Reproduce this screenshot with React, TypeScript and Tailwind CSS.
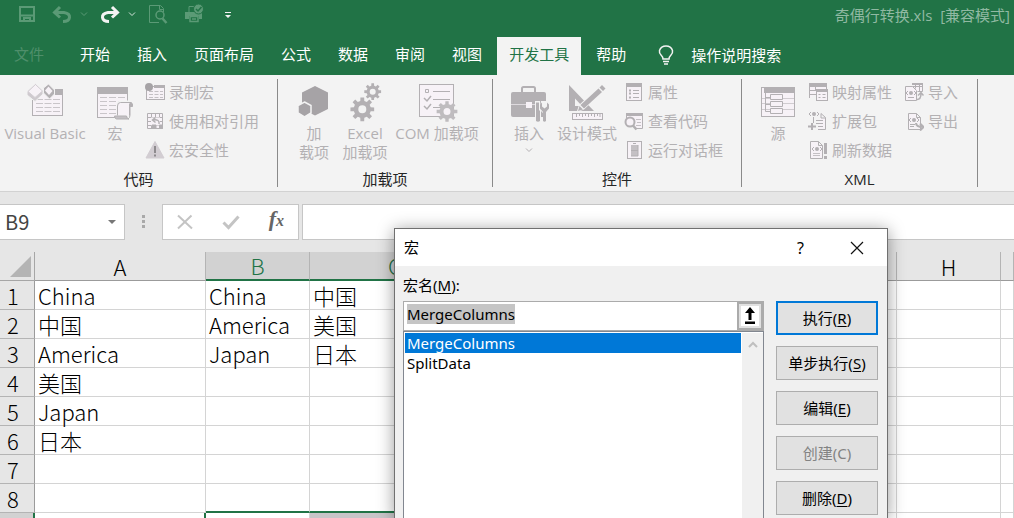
import React, { useEffect, useRef, useState, ReactNode } from 'react';

const INK = '#b3b0b3';
const PALE = '#f7f2f7';

const tabs = ['开始', '插入', '页面布局', '公式', '数据', '审阅', '视图', '开发工具', '帮助'];

const columns = ['A', 'B', 'C', 'D', 'E', 'F', 'G', 'H', 'I'];

const rows = [
  ['China', 'China', '中国'],
  ['中国', 'America', '美国'],
  ['America', 'Japan', '日本'],
  ['美国'],
  ['Japan'],
  ['日本'],
  [],
  [],
  [],
];

const macros = ['MergeColumns', 'SplitData'];

const dialogButtons = [
  { label: '执行', hotkey: 'R', primary: true },
  { label: '单步执行', hotkey: 'S' },
  { label: '编辑', hotkey: 'E' },
  { label: '创建', hotkey: 'C', disabled: true },
  { label: '删除', hotkey: 'D' },
];

// ---------- icons ----------

const gearPath = (cx: number, cy: number, r: number, hole: number, teeth = 8) => {
  const pts: string[] = [];
  const step = (Math.PI * 2) / teeth;
  for (let i = 0; i < teeth; i++) {
    const a = i * step - Math.PI / 2;
    [
      [-0.3, 0.72],
      [-0.2, 1],
      [0.2, 1],
      [0.3, 0.72],
    ].forEach(([off, k]) => {
      const t = a + off * step;
      pts.push(`${(cx + Math.cos(t) * r * k).toFixed(2)} ${(cy + Math.sin(t) * r * k).toFixed(2)}`);
    });
  }
  return `M${pts.join('L')}ZM${cx - hole} ${cy}a${hole} ${hole} 0 1 0 ${hole * 2} 0a${hole} ${hole} 0 1 0 ${-hole * 2} 0Z`;
};

const BigIcon = ({ children }: { children: ReactNode }) => (
  <svg className="h-[42px] w-[42px] shrink-0" viewBox="0 0 42 42" fill="none" stroke={INK} aria-hidden="true">
    {children}
  </svg>
);

const SmallIcon = ({ children }: { children: ReactNode }) => (
  <svg className="h-5 w-5 shrink-0" viewBox="0 0 20 20" fill="none" stroke={INK} aria-hidden="true">
    {children}
  </svg>
);

const VisualBasicIcon = () => (
  <BigIcon>
    <rect x="8.5" y="9.5" width="30" height="24" fill={PALE} />
    <rect x="31" y="7" width="8" height="6" fill={INK} stroke="none" />
    <path d="M12 17.5h24M12 21.5h24M12 25.5h24M12 29.5h24" strokeDasharray="7 1.5" stroke="#c9c5c9" />
    <path d="M11.500 1.500L19 9v3l-8 7.500L3 13v-3.500z" fill="#cfcacf" stroke="#f3f3f3" />
    <path d="M11.500 2.500L18.500 9L11 15.500L4 9.500z" fill={PALE} stroke="#d4cfd4" />
    <path d="M24.500 2l6 6v4l-5 5-6-6V6z" fill={INK} stroke="#f3f3f3" />
    <path d="M24.500 4.500l4 4.500-3.500 4-4-4.500z" fill={PALE} stroke="none" />
  </BigIcon>
);

const MacroIcon = () => (
  <BigIcon>
    <rect x="3.500" y="5.500" width="30" height="30" fill={PALE} />
    <rect x="3" y="5" width="31" height="7" fill={INK} stroke="none" />
    <path d="M6 15.500h25M6 19.500h25M6 23.500h25M6 27.500h25M6 31.500h25" strokeDasharray="7 2" stroke="#c9c5c9" />
    <path d="M24 35V23q0-3 3-3h11q1.500 0 1.500 2.500v2H36V35z" fill={PALE} stroke="#f3f3f3" strokeWidth="3" />
    <path d="M23.500 33.500V24q0-3.500 3-3.500h10.500q-1.500 1-1.500 4v9" fill={PALE} />
    <path d="M37 20.500q2 .5 1.500 4h-3q0-4 1.500-4z" fill={INK} />
    <path d="M20.500 34h12q0 2.500 2.500 3H22.500q-2-.5-2-3z" fill="#c4c0c4" />
    <path d="M36 25v8q0 3-2 4" />
  </BigIcon>
);

const AddInsIcon = () => (
  <BigIcon>
    <path d="M22 4L35 10.500V27L22 33.500L9 27V10.500z" fill="#a6a3a6" stroke="none" />
    <path d="M11.500 20L18 23.500V31L11.500 35L5 31V23.500z" fill="#a6a3a6" stroke="#f3f3f3" strokeWidth="1.500" />
  </BigIcon>
);

const GearsIcon = () => (
  <BigIcon>
    <path d={gearPath(18.3, 27.3, 12, 4)} fill={INK} fillRule="evenodd" stroke="none" />
    <path d={gearPath(28.700, 9.700, 8.500, 3)} fill={INK} fillRule="evenodd" stroke="none" />
  </BigIcon>
);

const ComIcon = () => (
  <BigIcon>
    <rect x="3.500" y="2.500" width="34" height="32" fill={PALE} />
    <path d="M9.500 7.500h3v3h-3zM17 9.500h17M17 17.500h17M17 25.500h10" />
    <path d="M8 16l3 3 4-5M8 24l3 3 4-5" strokeWidth="1.500" />
    <path d={gearPath(31, 29.500, 10.500, 3.500)} fill="#bfbcbf" fillRule="evenodd" stroke="none" />
  </BigIcon>
);

const ToolboxIcon = () => (
  <BigIcon>
    <path d="M14 10V6.500q0-1.500 1.500-1.500h10q1.500 0 1.500 1.500V10" strokeWidth="2" />
    <rect x="3" y="10" width="35" height="25" rx="2" fill={INK} stroke="none" />
    <path d="M3 22.500h15M24 22.500h14" stroke="#dedade" />
    <rect x="18" y="20" width="6" height="6" fill={PALE} stroke="none" />
    <path d="M27 19h5v9h1v12h-6V28zM33 19h9v9l-3 3v9h-4v-9l-3-3z" fill="#f3f3f3" stroke="none" />
    <path d="M28 20.500h3v8h1V39q-2 1.500-4 0V28.500z" fill={INK} stroke="none" />
    <path d="M34 20.500v4l2.500 2 2.500-2v-4l2 2v4l-3 3.500v9q-1.500 1.500-3 0v-9l-3-3.500v-4z" fill={INK} stroke="none" />
  </BigIcon>
);

const DesignIcon = () => (
  <BigIcon>
    <path d="M3 3L28 29H3zM9 16.500V24h7z" fill={INK} fillRule="evenodd" stroke="none" />
    <path d="M36.500 1.500L41 6L18 27.500L10.500 30.500L13 23z" fill="#f3f3f3" stroke="none" />
    <path d="M36 3l3.500 3.500-2.500 2.500-3.500-3.500zM32.500 6.500l3.500 3.500L18 26.500 14.500 23zM13.500 24l3.500 3.500L12 29z" fill={INK} stroke="none" />
    <rect x="6.500" y="31.500" width="30" height="6" fill={PALE} />
    <path d="M10.500 32v3M13.500 32v2M16.500 32v3M19.500 32v2M22.500 32v3M25.500 32v2M28.500 32v3M31.500 32v2M34 32v3" />
  </BigIcon>
);

const SourceIcon = () => (
  <BigIcon>
    <rect x="4.500" y="5.500" width="33" height="29" fill={PALE} />
    <rect x="7" y="5" width="31" height="6" fill={INK} stroke="none" />
    <path d="M5 16.500h32M5 21.500h32M5 27.500h32" stroke="#d0ccd0" />
    <path d="M8.500 5v24.500H14M8.500 15.500H14M8.500 22.500H14" />
    <path d="M13.500 12.500h12v5h-12zM13.500 19.500h12v5h-12zM13.500 26.500h12v5h-12z" fill={PALE} />
  </BigIcon>
);

const RecordIcon = () => (
  <SmallIcon>
    <rect x="1.500" y="4.500" width="18" height="13" fill={PALE} />
    <rect x="9" y="3" width="11" height="3" fill={INK} stroke="none" />
    <path d="M4 9.500h14M4 12.500h14M4 15.500h14" strokeDasharray="4 1.500" stroke="#c4c0c4" />
    <circle cx="4" cy="5" r="4" fill="#a6a3a6" stroke="none" />
  </SmallIcon>
);

const RelativeIcon = () => (
  <SmallIcon>
    <path d="M2.500 2.500h15v15h-15zM2.500 6.500h15M2.500 10.500h15M2.500 14.500h15M6.500 2.500v15M10.500 2.500v15M14.500 2.500v15" fill={PALE} />
    <path d="M6 6.500h9v8H6z" fill={PALE} stroke="none" />
    <path d="M14 13q1-5-6-4M10.500 6.500L7.500 9l3 2.500" strokeWidth="1.500" />
    <path d="M7 14h4v3.500H7zM14.500 14h3v3.500h-3z" fill={INK} />
  </SmallIcon>
);

const WarningIcon = () => (
  <SmallIcon>
    <path d="M10 1.500L19 18H1z" fill="#d2cdd2" stroke="#d2cdd2" strokeLinejoin="round" />
    <path d="M10 6v7M10 14.500v2" stroke="#8e8b8e" strokeWidth="2" />
  </SmallIcon>
);

const PropertiesIcon = () => (
  <SmallIcon>
    <rect x="2.500" y="1.500" width="15" height="17" fill={PALE} />
    <rect x="2" y="1" width="16" height="4" fill={INK} stroke="none" />
    <path d="M9 8.500h6M9 11.500h6M9 15.500h6" />
    <path d="M5 8.500h2M5 11.500h2M5 15.500h2" strokeWidth="2" />
  </SmallIcon>
);

const ViewCodeIcon = () => (
  <SmallIcon>
    <path d="M2.500 7V3.500h16v14H12" fill={PALE} />
    <rect x="2" y="2" width="17" height="3" fill={INK} stroke="none" />
    <path d="M12 8.500h5M13 11.500h4M12 14.500h5" stroke="#c4c0c4" />
    <circle cx="6" cy="11" r="4.500" fill={PALE} strokeWidth="2" />
    <path d="M9 14.500l3.500 4" strokeWidth="2.500" />
  </SmallIcon>
);

const RunDialogIcon = () => (
  <SmallIcon>
    <rect x="3.500" y="1.500" width="14" height="17" fill={PALE} />
    <path d="M9 3.500h3" />
    <rect x="7" y="5" width="7" height="11" fill="#c4c0c4" stroke="none" />
    <path d="M7 10.500h7M14 5v11H7" />
  </SmallIcon>
);

const MapIcon = () => (
  <SmallIcon>
    <path d="M1.500 16V2.500h17V8M2 8.500h7M2 12.500h7M7.500 5v3" fill={PALE} />
    <rect x="1" y="1" width="18" height="4" fill={INK} stroke="none" />
    <rect x="8.500" y="8.500" width="11" height="10" fill={PALE} />
    <rect x="8" y="7" width="12" height="3" fill={INK} stroke="none" />
    <path d="M10.500 12.500h2M14.500 12.500h3M10.500 15.500h2M14.500 15.500h3" />
  </SmallIcon>
);

const Eye = ({ x, y }: { x: number; y: number }) => (
  <g transform={`translate(${x} ${y})`}>
    <path d="M-3 -2L-5 0L-3 2M3 -2L5 0L3 2" />
    <circle r="2" fill={INK} stroke="none" />
  </g>
);

const ExpansionIcon = () => (
  <SmallIcon>
    <path d="M5.500 12V6M13 2.500l4.500 4V18.500H10M13 2.500V7h4.500" fill={PALE} />
    <path d="M8 9.500h7M8 12.500h7M10 15.500h5" />
    <Eye x={6} y={3} />
    <path d="M4 12v7M0 15.500h8" strokeWidth="2" />
  </SmallIcon>
);

const RefreshIcon = () => (
  <SmallIcon>
    <path d="M2.500 1.500h8l4 4v13h-12zM10.500 1.500v4h4" fill={PALE} />
    <path d="M5 13.500h7M5 15.500h7" stroke="#c4c0c4" />
    <Eye x={9} y={9} />
    <path d="M17.500 3v11M17.500 16v3" strokeWidth="3" />
  </SmallIcon>
);

const ImportIcon = () => (
  <SmallIcon>
    <path d="M1.500 4.500h7l4 4v10h-11z" fill={PALE} />
    <path d="M8.500 1.500h10v8h-5M8.500 4.500h10M11.500 1.500v5M15.500 1.500v8" fill={PALE} />
    <path d="M8 1h11v2H8z" fill={INK} stroke="none" />
    <Eye x={7} y={11} />
    <path d="M4 15.500h6" />
    <path d="M13 17.500q4 0 4-6M14 13.500l3-3 2.500 3" strokeWidth="1.500" />
  </SmallIcon>
);

const ExportIcon = () => (
  <SmallIcon>
    <path d="M4.500 2.500h8l4 4v12h-12zM12.500 2.500v4h4" fill={PALE} />
    <Eye x={10} y={9} />
    <path d="M6 13.500h5M6 15.500h4" />
    <path d="M12 12q0 4 7 4M16 12.500l3.500 3.500-3.500 3.500" strokeWidth="2" />
  </SmallIcon>
);

const DownChevron = ({ color }: { color: string }) => (
  <svg className="h-1.5 w-2" viewBox="0 0 8 6" fill="none" stroke={color} aria-hidden="true">
    <path d="M1 1.500l3 3 3-3" />
  </svg>
);

// ---------- ribbon ----------

const LargeButton = ({ icon, className, children }: { icon: ReactNode; className: string; children: ReactNode }) => (
  <button type="button" disabled className={`flex shrink-0 flex-col items-center pt-[3px] leading-[19px] whitespace-nowrap ${className}`}>
    {icon}
    {children}
  </button>
);

const SmallButton = ({ icon, children }: { icon: ReactNode; children: ReactNode }) => (
  <button type="button" disabled className="flex h-[29px] items-center gap-1 pb-1 whitespace-nowrap">
    {icon}
    <span className="leading-5">{children}</span>
  </button>
);

const RibbonGroup = ({ title, className, children }: { title: string; className: string; children: ReactNode }) => (
  <section className={`flex shrink-0 flex-col border-r border-[#8a8a8a] ${className}`}>
    <div className="flex h-[90px] items-start text-[#b3b1b3]">{children}</div>
    <h2 className="h-[18px] text-center leading-5 text-[#262626]">{title}</h2>
  </section>
);

const Ribbon = () => (
  <div className="flex shrink-0 border-b border-[#d2d2d2] bg-[#f3f3f3] pt-1 pb-1 text-[15px]">
    <RibbonGroup title="代码" className="w-[278px]">
      <LargeButton icon={<VisualBasicIcon />} className="w-[90px]">Visual Basic</LargeButton>
      <LargeButton icon={<MacroIcon />} className="w-[50px]">宏</LargeButton>
      <div className="ml-[5px]">
        <SmallButton icon={<RecordIcon />}>录制宏</SmallButton>
        <SmallButton icon={<RelativeIcon />}>使用相对引用</SmallButton>
        <SmallButton icon={<WarningIcon />}>宏安全性</SmallButton>
      </div>
    </RibbonGroup>
    <RibbonGroup title="加载项" className="w-[215px]">
      <LargeButton icon={<AddInsIcon />} className="ml-3.5 w-11">
        <span>加<br />载项</span>
      </LargeButton>
      <LargeButton icon={<GearsIcon />} className="w-[58px]">
        <span>Excel<br />加载项</span>
      </LargeButton>
      <LargeButton icon={<ComIcon />} className="w-[86px]">COM 加载项</LargeButton>
    </RibbonGroup>
    <RibbonGroup title="控件" className="w-[249px]">
      <LargeButton icon={<ToolboxIcon />} className="ml-2.5 w-[52px]">
        插入
        <span className="mt-1"><DownChevron color={INK} /></span>
      </LargeButton>
      <LargeButton icon={<DesignIcon />} className="w-16">设计模式</LargeButton>
      <div className="ml-[5px]">
        <SmallButton icon={<PropertiesIcon />}>属性</SmallButton>
        <SmallButton icon={<ViewCodeIcon />}>查看代码</SmallButton>
        <SmallButton icon={<RunDialogIcon />}>运行对话框</SmallButton>
      </div>
    </RibbonGroup>
    <RibbonGroup title="XML" className="w-[236px]">
      <LargeButton icon={<SourceIcon />} className="ml-2.5 w-[52px]">源</LargeButton>
      <div className="ml-1">
        <SmallButton icon={<MapIcon />}>映射属性</SmallButton>
        <SmallButton icon={<ExpansionIcon />}>扩展包</SmallButton>
        <SmallButton icon={<RefreshIcon />}>刷新数据</SmallButton>
      </div>
      <div className="ml-3">
        <SmallButton icon={<ImportIcon />}>导入</SmallButton>
        <SmallButton icon={<ExportIcon />}>导出</SmallButton>
      </div>
    </RibbonGroup>
  </div>
);

// ---------- title bar and tabs ----------

const QuickAccess = () => (
  <div className="flex items-center">
    <button type="button" disabled aria-label="保存" className="ml-[18px]">
      <svg className="h-[18px] w-[18px]" viewBox="0 0 18 18" fill="none" stroke="#5b9a76" strokeWidth="2">
        <path d="M2 2h14v14H2zM2 10.500h14M6 16v-3h6v3" />
      </svg>
    </button>
    <button type="button" disabled aria-label="撤消" className="ml-4 flex items-center gap-2">
      <svg className="h-5 w-5" viewBox="0 0 20 20" fill="none" stroke="#5b9a76" strokeWidth="3">
        <path d="M3 8.500h9q6 1 5.500 5-.5 4-6.500 4" />
        <path d="M8 3L2.500 8.500 8 13.500" />
      </svg>
      <DownChevron color="#5b9a76" />
    </button>
    <button type="button" aria-label="恢复" className="ml-3 flex items-center gap-2">
      <svg className="h-5 w-5" viewBox="0 0 20 20" fill="none" stroke="#f3f3f3" strokeWidth="3">
        <path d="M17 8.500H8q-6 1-5.500 5 .5 4 6.500 4" />
        <path d="M12 3l5.500 5.500L12 13.500" />
      </svg>
      <DownChevron color="#d5e5dc" />
    </button>
    <button type="button" disabled aria-label="打印预览" className="ml-3">
      <svg className="h-5 w-5" viewBox="0 0 20 20" fill="none" stroke="#5b9a76">
        <path d="M15.500 8V4.500l-3-3H1.500v17H11M11.500 1.500v4h4" />
        <circle cx="12" cy="11" r="4" strokeWidth="1.500" />
        <path d="M14.500 14.500l4 4.500" strokeWidth="2.500" />
      </svg>
    </button>
    <button type="button" disabled aria-label="快速打印" className="ml-4">
      <svg className="h-5 w-5" viewBox="0 0 20 20" fill="none" stroke="#5b9a76">
        <path d="M5 8V2.500h5" />
        <path d="M1 8h17v7h-3v-3H5v3H1z" fill="#5b9a76" stroke="none" />
        <path d="M6 12.500h8v5H6zM8 15h4" strokeWidth="1.500" />
        <circle cx="14.500" cy="5" r="5" fill="#5b9a76" stroke="#217346" />
        <path d="M12 5l2 2 3.500-4" stroke="#217346" strokeWidth="1.500" />
      </svg>
    </button>
    <button type="button" aria-label="自定义快速访问工具栏" className="ml-5 pt-0.5">
      <svg className="h-2 w-2" viewBox="0 0 8 8" fill="#f3f3f3">
        <path d="M1 1h6v1H1zM1 4h6l-3 3z" />
      </svg>
    </button>
  </div>
);

const Header = () => (
  <header className="shrink-0 bg-[#217346] text-[15px] text-white">
    <div className="flex h-[37px] items-start justify-between pt-1 pr-1">
      <QuickAccess />
      <h1 className="leading-[22px] whitespace-pre text-[#90b9a2]">奇偶行转换.xls  [兼容模式]</h1>
    </div>
    <nav className="flex h-[38px] items-stretch gap-[3px] whitespace-nowrap">
      <button type="button" disabled className="mr-[9px] pr-3 pb-1 pl-3.5 text-[#4f8f6b]">文件</button>
      {tabs.map((tab) => (
        <button
          key={tab}
          type="button"
          className={tab === '开发工具' ? 'bg-[#f3f3f3] px-3 pb-1 text-[#217346]' : 'px-3 pb-1'}
        >
          {tab}
        </button>
      ))}
      <button type="button" className="ml-4 flex items-center gap-4 pb-0.5">
        <svg className="h-5 w-[18px]" viewBox="-1 0 18 20" fill="none" stroke="#f3f3f3" strokeWidth="1.500" aria-hidden="true">
          <path d="M5 14q0-2-2-4Q1 8 1.500 5.500 3 1 8 1t6.500 4.500Q15 8 13 10q-2 2-2 4zM5 16.500h6M6 19h4" />
        </svg>
        操作说明搜索
      </button>
    </nav>
  </header>
);

const FormulaBar = () => (
  <div className="flex h-[60px] shrink-0 items-center bg-[#e6e6e6]">
    <label className="flex h-9 w-[125px] items-center border border-l-0 border-[#c6c6c6] bg-white">
      <input
        aria-label="名称框"
        defaultValue="B9"
        className="w-[108px] bg-transparent pl-[5px] font-['Noto_Sans_CJK_SC',sans-serif] text-xl text-[#444] outline-none"
      />
      <svg className="h-1.5 w-2" viewBox="0 0 8 6" fill="#777" aria-hidden="true">
        <path d="M0 1h8L4 5z" />
      </svg>
    </label>
    <svg className="mx-[17px] h-4 w-[3px]" viewBox="0 0 3 16" fill="#a9a9a9" aria-hidden="true">
      <path d="M0 1h3v3H0zM0 6h3v3H0zM0 11h3v3H0z" />
    </svg>
    <div className="flex h-9 w-[137px] shrink-0 items-center justify-between border border-[#c6c6c6] bg-white px-3.5">
      <button type="button" aria-label="取消">
        <svg className="h-4 w-4" viewBox="0 0 16 16" fill="none" stroke="#c4c4c4" strokeWidth="2">
          <path d="M1 1.500l14 13M14.500 1.500L1 14.500" />
        </svg>
      </button>
      <button type="button" aria-label="输入">
        <svg className="h-4 w-[18px]" viewBox="0 0 18 16" fill="none" stroke="#c4c4c4" strokeWidth="3">
          <path d="M1.500 8.500l5 5L16.500 2.500" />
        </svg>
      </button>
      <button type="button" aria-label="插入函数" className="pb-1 font-['Liberation_Serif',serif] text-[22px] leading-6 font-bold text-[#666] italic">
        f<span className="text-base">x</span>
      </button>
    </div>
    <input aria-label="编辑栏" className="ml-[3px] h-9 min-w-0 flex-1 border border-r-0 border-[#c6c6c6] bg-white px-1 outline-none" />
  </div>
);

// ---------- sheet ----------

const cellClass = (col: string, row: number) => {
  if (row === 8 && (col === 'B' || col === 'C')) return 'border-r border-b-2 border-r-[#d4d4d4] border-b-[#217346]';
  if (row === 9 && col === 'A') return 'border-r-2 border-b border-r-[#217346] border-b-[#d4d4d4]';
  if (row === 9 && col === 'C') return 'border-r border-b border-[#d4d4d4] bg-[#c8c5c8]';
  return 'border-r border-b border-[#d4d4d4]';
};

const Sheet = () => (
  <table className="w-full table-fixed border-separate border-spacing-0 bg-white text-[22px] leading-7 text-black">
    <colgroup>
      <col className="w-[35px]" />
      <col className="w-[171px]" />
      <col className="w-[104px]" />
      <col className="w-[171px]" />
      <col className="w-[104px]" />
      <col className="w-[104px]" />
      <col className="w-[104px]" />
      <col className="w-[104px]" />
      <col className="w-[104px]" />
      <col />
    </colgroup>
    <thead>
      <tr className="h-[29px] bg-[#e6e6e6]">
        <th className="border-r border-b border-[#a6a6a6] p-0 align-bottom">
          <svg className="mr-[3px] mb-[3px] ml-auto h-[21px] w-[21px]" viewBox="0 0 21 21" fill="#b4b4b4" aria-hidden="true">
            <path d="M21 0v21H0z" />
          </svg>
        </th>
        {columns.map((col) => (
          <th
            key={col}
            scope="col"
            className={
              col === 'B' || col === 'C'
                ? 'border-r border-b-2 border-r-[#b4b4b4] border-b-[#217346] bg-[#d2d2d2] p-0 leading-[27px] font-light text-[#217346]'
                : 'border-r border-b border-r-[#b4b4b4] border-b-[#9b9b9b] p-0 font-light'
            }
          >
            {col === 'I' ? '' : col}
          </th>
        ))}
      </tr>
    </thead>
    <tbody>
      {rows.map((row, i) => (
        <tr key={i} className="h-[29px]">
          <th
            scope="row"
            className={
              i === 8
                ? 'border-r-2 border-r-[#217346] bg-[#d2d2d2] p-0 pr-2 font-light text-[#217346]'
                : 'border-r border-b border-r-[#9b9b9b] border-b-[#b4b4b4] bg-[#e6e6e6] p-0 pr-2 font-light'
            }
          >
            {/* row 9 only peeks in from below */}
            {i < 8 && i + 1}
          </th>
          {columns.map((col, c) => (
            <td key={col} className={`p-0 pl-[3px] whitespace-nowrap ${cellClass(col, i + 1)}`}>
              {row[c]}
            </td>
          ))}
        </tr>
      ))}
    </tbody>
  </table>
);

// ---------- macro dialog ----------

const MacroDialog = () => {
  const [selected, setSelected] = useState('MergeColumns');
  const nameRef = useRef<HTMLInputElement>(null);

  useEffect(() => {
    nameRef.current?.focus();
    nameRef.current?.select();
  }, [selected]);

  return (
    <div
      role="dialog"
      aria-labelledby="macro-title"
      className="absolute top-[228px] bottom-0 left-[394px] flex w-[494px] flex-col border border-b-0 border-[#707070] bg-[#f0f0f0] font-['Noto_Sans','Noto_Sans_CJK_SC',sans-serif] text-[15px] text-black shadow-[0_2px_16px_rgba(0,0,0,0.4)]"
    >
      <div className="flex h-[37px] shrink-0 items-center bg-white pr-[22px] pl-[9px]">
        <h2 id="macro-title" className="flex-1">宏</h2>
        <button type="button" aria-label="帮助" className="mr-[45px] text-base">?</button>
        <button type="button" aria-label="关闭">
          <svg className="h-4 w-4" viewBox="0 0 16 16" fill="none" stroke="#111" strokeWidth="1.200">
            <path d="M2 2l12 12M14 2L2 14" />
          </svg>
        </button>
      </div>
      <div className="flex min-h-0 flex-1 gap-3 pr-[9px] pl-2">
        <div className="flex w-[361px] flex-col">
          <label htmlFor="macro-name" className="h-[35px] pt-2 leading-[22px]">
            宏名(<u className="underline-offset-2">M</u>):
          </label>
          <div className="flex h-[30px] shrink-0 border border-[#ababab] bg-white">
            <input
              id="macro-name"
              ref={nameRef}
              value={selected}
              onChange={(e) => setSelected(e.target.value)}
              className="mt-0.5 ml-[3px] h-5 min-w-0 flex-1 self-start leading-5 outline-none selection:bg-[#c5c5c5] selection:text-black"
            />
            <button type="button" aria-label="折叠" className="flex w-[26px] items-center justify-center border-2 border-[#ababab] bg-[#e1e1e1]">
              <svg className="h-5 w-[18px] bg-white" viewBox="0 0 18 20" fill="#000" aria-hidden="true">
                <path d="M9 1l5 6h-3.500v7h-3V7H4zM4 15.500h10v2.500H4z" />
              </svg>
            </button>
          </div>
          <div className="flex min-h-0 flex-1 border border-b-0 border-[#828790] bg-white pt-px pl-px">
            <ul role="listbox" aria-label="宏名" className="flex-1">
              {macros.map((name) => (
                <li
                  key={name}
                  role="option"
                  aria-selected={name === selected}
                  onClick={() => setSelected(name)}
                  className={name === selected ? 'h-5 bg-[#0078d7] pl-0.5 leading-5 text-white' : 'h-5 pl-0.5 leading-5'}
                >
                  {name}
                </li>
              ))}
            </ul>
            <div className="ml-px flex w-[21px] justify-center bg-[#f0f0f0] pt-2">
              <svg className="h-2 w-2.5" viewBox="0 0 10 8" fill="none" stroke="#bfbfbf" strokeWidth="2" aria-hidden="true">
                <path d="M1 6l4-4 4 4" />
              </svg>
            </div>
          </div>
        </div>
        <div className="flex flex-1 flex-col gap-[11px] pt-[35px]">
          {dialogButtons.map((b) => (
            <button
              key={b.label}
              type="button"
              disabled={b.disabled}
              className={
                b.primary
                  ? 'h-[34px] shrink-0 border-2 border-[#0078d7] bg-[#e1e1e1]'
                  : 'h-[34px] shrink-0 border border-[#adadad] bg-[#e1e1e1] disabled:text-[#838383]'
              }
            >
              {b.label}({b.disabled ? b.hotkey : <u className="underline-offset-2">{b.hotkey}</u>})
            </button>
          ))}
        </div>
      </div>
    </div>
  );
};

const App = () => (
  <div className="relative flex h-screen flex-col overflow-hidden bg-[#e6e6e6] font-['Open_Sans','Noto_Sans_CJK_SC',sans-serif]">
    <Header />
    <Ribbon />
    <FormulaBar />
    <main className="font-['Noto_Sans_CJK_SC',sans-serif] font-light">
      <Sheet />
    </main>
    <MacroDialog />
  </div>
);

export default App;
